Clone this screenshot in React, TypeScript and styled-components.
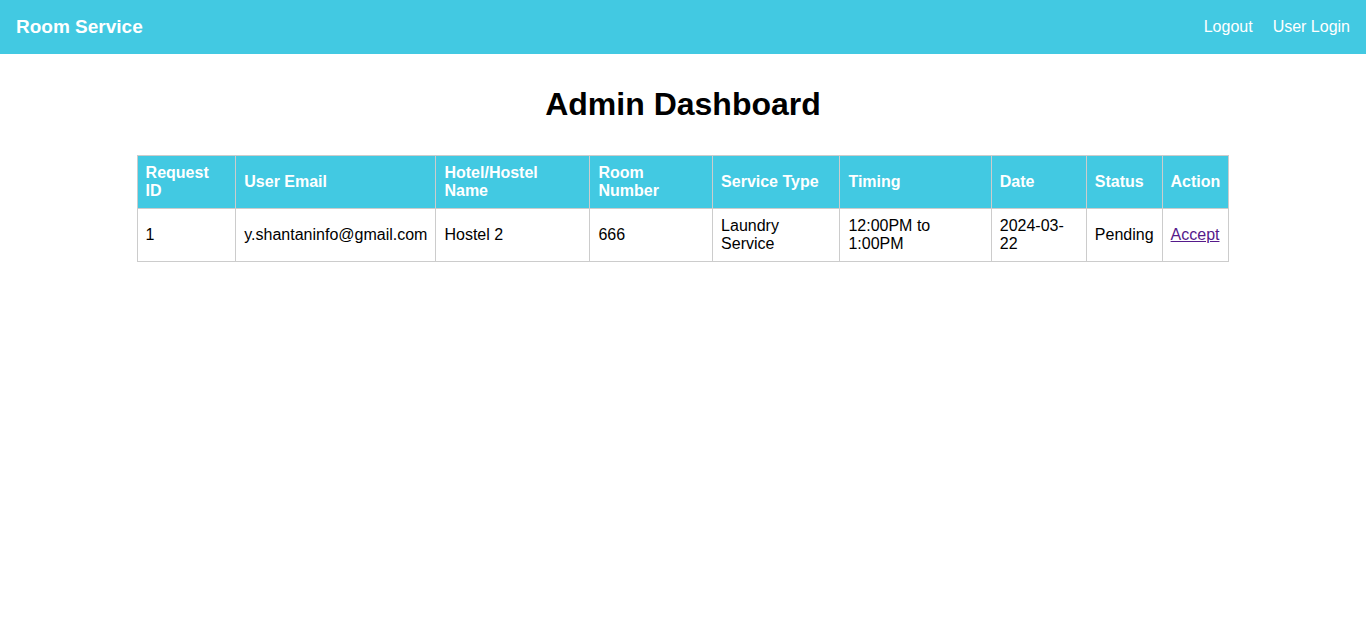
import React from "react";
import styled, { createGlobalStyle } from "styled-components";

const Global = createGlobalStyle`
  body {
    margin: 0;
    font-family: "Liberation Sans", Arial, sans-serif;
    background: #fff;
    color: #000;
  }
`;

const Nav = styled.nav`
  height: 54px;
  background: #42c9e2;
  display: flex;
  align-items: center;
  justify-content: space-between;
  padding: 0 16px;
  box-sizing: border-box;
`;

const Brand = styled.div`
  color: #fff;
  font-weight: bold;
  font-size: 19px;
`;

const NavLinks = styled.div`
  display: flex;
  gap: 20px;
`;

const NavLink = styled.a`
  color: #fff;
  text-decoration: none;
  font-size: 16px;
`;

const Main = styled.main`
  padding-top: 32px;
`;

const Title = styled.h1`
  margin: 0 0 32px;
  text-align: center;
  font-size: 32px;
  line-height: 37px;
`;

const Table = styled.table`
  width: 80%;
  margin: 0 auto;
  border-collapse: collapse;
  font-size: 16px;
`;

const Th = styled.th`
  background: #42c9e2;
  color: #fff;
  text-align: left;
  padding: 8px;
  border: 1px solid #ccc;
  font-weight: bold;
`;

const Td = styled.td`
  padding: 8px;
  border: 1px solid #ccc;
`;

const ActionLink = styled.a`
  color: #551a8b;
  text-decoration: underline;
`;

const headers = [
  "Request ID",
  "User Email",
  "Hotel/Hostel Name",
  "Room Number",
  "Service Type",
  "Timing",
  "Date",
  "Status",
  "Action",
];

export default function App() {
  return (
    <>
      <Global />
      <Nav>
        <Brand>Room Service</Brand>
        <NavLinks>
          <NavLink href="#">Logout</NavLink>
          <NavLink href="#">User Login</NavLink>
        </NavLinks>
      </Nav>
      <Main>
        <Title>Admin Dashboard</Title>
        <Table>
          <thead>
            <tr>
              {headers.map((h) => (
                <Th key={h}>{h}</Th>
              ))}
            </tr>
          </thead>
          <tbody>
            <tr>
              <Td>1</Td>
              <Td>y.shantaninfo@gmail.com</Td>
              <Td>Hostel 2</Td>
              <Td>666</Td>
              <Td>Laundry Service</Td>
              <Td>12:00PM to 1:00PM</Td>
              <Td>2024-03-22</Td>
              <Td>Pending</Td>
              <Td>
                <ActionLink href="#">Accept</ActionLink>
              </Td>
            </tr>
          </tbody>
        </Table>
      </Main>
    </>
  );
}
